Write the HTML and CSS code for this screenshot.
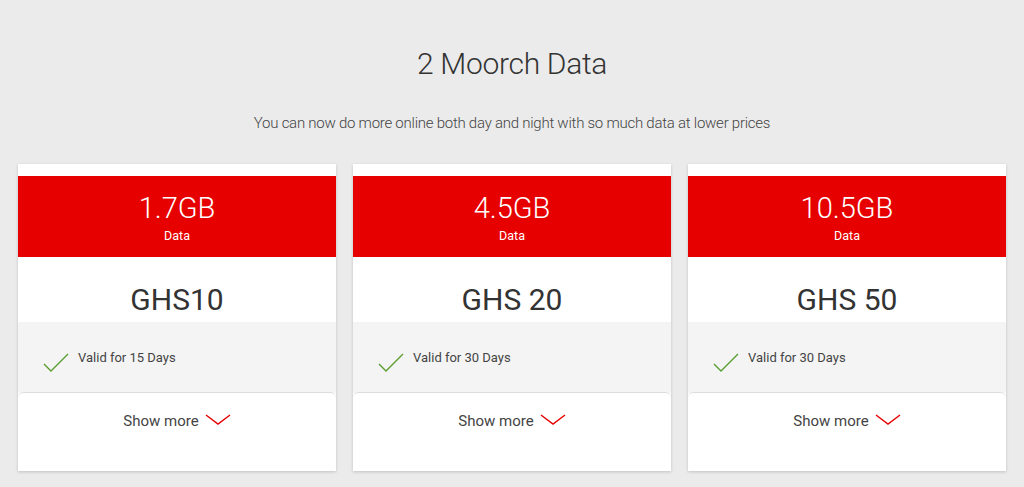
FILE: index.html
```html
<!DOCTYPE html>
<html lang="en">
<head>
<meta charset="utf-8">
<title>2 Moorch Data</title>
<link rel="stylesheet" href="styles.css">
</head>
<body>
<div class="page">
  <div class="topcut">g</div>
  <h1 class="title">2 Moorch Data</h1>
  <p class="subtitle">You can now do more online both day and night with so much data at lower prices</p>
  <div class="cards">
    <div class="card">
      <div class="card-head">
        <div class="amount">1.7GB</div>
        <div class="unit">Data</div>
      </div>
      <div class="price">GHS10</div>
      <div class="features">
        <svg class="check" viewBox="0 0 26 22" width="26" height="22"><path d="M1 14 L8 21 L25 4" fill="none" stroke="#5a9e32" stroke-width="1.4"/></svg>
        <span>Valid for 15 Days</span>
      </div>
      <div class="more">
        <span>Show more</span>
        <svg class="chev" viewBox="0 0 26 12" width="26" height="12"><path d="M1 1 L13 10 L25 1" fill="none" stroke="#e60000" stroke-width="1.4"/></svg>
      </div>
    </div>
    <div class="card">
      <div class="card-head">
        <div class="amount">4.5GB</div>
        <div class="unit">Data</div>
      </div>
      <div class="price">GHS 20</div>
      <div class="features">
        <svg class="check" viewBox="0 0 26 22" width="26" height="22"><path d="M1 14 L8 21 L25 4" fill="none" stroke="#5a9e32" stroke-width="1.4"/></svg>
        <span>Valid for 30 Days</span>
      </div>
      <div class="more">
        <span>Show more</span>
        <svg class="chev" viewBox="0 0 26 12" width="26" height="12"><path d="M1 1 L13 10 L25 1" fill="none" stroke="#e60000" stroke-width="1.4"/></svg>
      </div>
    </div>
    <div class="card">
      <div class="card-head">
        <div class="amount">10.5GB</div>
        <div class="unit">Data</div>
      </div>
      <div class="price">GHS 50</div>
      <div class="features">
        <svg class="check" viewBox="0 0 26 22" width="26" height="22"><path d="M1 14 L8 21 L25 4" fill="none" stroke="#5a9e32" stroke-width="1.4"/></svg>
        <span>Valid for 30 Days</span>
      </div>
      <div class="more">
        <span>Show more</span>
        <svg class="chev" viewBox="0 0 26 12" width="26" height="12"><path d="M1 1 L13 10 L25 1" fill="none" stroke="#e60000" stroke-width="1.4"/></svg>
      </div>
    </div>
  </div>
</div>
</body>
</html>
```

FILE: styles.css
```css
* { box-sizing: border-box; }
html, body {
  margin: 0;
  padding: 0;
  background: #ebebeb;
  font-family: Roboto, "Liberation Sans", sans-serif;
  color: #333;
}
.page {
  width: 1024px;
  height: 487px;
  overflow: hidden;
}
.topcut {
  height: 0;
  text-align: center;
  font-size: 20px;
  line-height: 0;
  color: #444;
  margin-left: -88px;
  transform: translateY(-14px);
}
.title {
  margin: 0;
  padding-top: 45px;
  text-align: center;
  font-weight: 300;
  font-size: 30px;
  letter-spacing: -0.3px;
  line-height: 38px;
  color: #333;
}
.subtitle {
  margin: 0;
  padding-top: 30px;
  text-align: center;
  font-weight: 300;
  font-size: 15px;
  letter-spacing: -0.25px;
  line-height: 20px;
  color: #444;
}
.cards {
  display: grid;
  grid-template-columns: repeat(3, 318px);
  gap: 17px;
  padding: 31px 18px 0;
}
.card {
  background: #fff;
  height: 307px;
  box-shadow: 0 1px 3px rgba(0,0,0,0.18);
  padding-top: 12px;
  display: flex;
  flex-direction: column;
}
.card-head {
  background: #e60000;
  height: 81px;
  color: #fff;
  text-align: center;
  padding-top: 15px;
}
.amount {
  font-weight: 300;
  font-size: 29px;
  line-height: 34px;
}
.unit {
  font-size: 12.5px;
  line-height: 18px;
  margin-top: 2px;
}
.price {
  height: 65px;
  text-align: center;
  font-weight: 400;
  font-size: 30px;
  line-height: 85px;
  color: #333;
}
.features {
  background: #f4f4f4;
  height: 71px;
  display: flex;
  align-items: center;
  padding-left: 25px;
  font-size: 13px;
  color: #444;
}
.check {
  margin-right: 9px;
  margin-top: 6px;
}
.more {
  flex: 1;
  background: #fff;
  border-top: 1px solid #dcdcdc;
  border-radius: 6px 6px 0 0;
  margin-top: -1px;
  display: flex;
  justify-content: center;
  align-items: flex-start;
  padding-top: 19px;
  font-size: 15px;
  color: #444;
}
.more span { line-height: 18px; }
.chev {
  margin-left: 6px;
  margin-top: 2px;
}
```
